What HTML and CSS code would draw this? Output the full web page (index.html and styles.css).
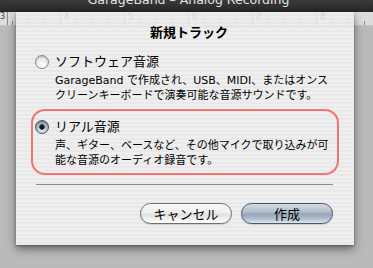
FILE: index.html
```html
<!DOCTYPE html>
<html lang="ja">
<head>
    <meta charset="UTF-8">
    <title>新規トラック</title>
    <link rel="stylesheet" href="styles.css">
</head>
<body>
<div class="titlebar"><span>GarageBand – Analog Recording</span></div>
<div class="workspace">
    <div class="ruler">
        <span>3</span><span>4</span><span>5</span><span>6</span><span>7</span><span>8</span>
    </div>

    <!-- シート（ダイアログ） -->
    <div class="sheet">
        <h1 class="sheet-title">新規トラック</h1>

        <div class="option">
            <div class="option-row">
                <span class="radio"></span>
                <span class="option-label">ソフトウェア音源</span>
            </div>
            <p class="option-desc">GarageBand で作成され、USB、MIDI、またはオンス<br>クリーンキーボードで演奏可能な音源サウンドです。</p>
        </div>

        <div class="option option-on">
            <div class="option-row">
                <span class="radio radio-on"></span>
                <span class="option-label">リアル音源</span>
            </div>
            <p class="option-desc">声、ギター、ベースなど、その他マイクで取り込みが可<br>能な音源のオーディオ録音です。</p>
        </div>

        <div class="separator"></div>

        <div class="buttons">
            <button class="btn">キャンセル</button>
            <button class="btn btn-default">作成</button>
        </div>
    </div>
</div>
</body>
</html>
```

FILE: styles.css
```css
*{
    box-sizing: border-box;
}
html, body{
    margin: 0;
    padding: 0;
}
body{
    width: 373px;
    height: 268px;
    overflow: hidden;
    background: #bababa;
    font-family: "DejaVu Sans", "Noto Sans CJK JP", sans-serif;
    color: #000;
}

/* ウィンドウのタイトルバー（上が切れている） */
.titlebar{
    height: 12px;
    overflow: hidden;
    background: linear-gradient(#3a3a3a, #262626);
    text-align: center;
}
.titlebar span{
    display: block;
    margin-top: -7px;
    padding-left: 4px;
    font-size: 12.5px;
    line-height: 14px;
    color: #e4e4e4;
}

.workspace{
    position: relative;
    height: 256px;
}

/* 定規 */
.ruler{
    display: flex;
    height: 14px;
    background-color: #dcdcdc;
    background-image:
        repeating-linear-gradient(to right, #8a8a8a 0 1px, transparent 1px 64px),
        repeating-linear-gradient(to right, #8a8a8a 0 1px, transparent 1px 16px);
    background-position: 60px 0, 12px 100%;
    background-size: 100% 100%, 100% 4px;
    background-repeat: repeat-x;
    border-bottom: 1px solid #c4c4c4;
}
.ruler span{
    flex: 0 0 64px;
    font-size: 8px;
    line-height: 10px;
    color: #444;
}

/* シート */
.sheet{
    position: absolute;
    left: 16px;
    top: 0;
    width: 338px;
    height: 233px;
    padding: 13px 0 0;
    background:
        repeating-linear-gradient(to bottom, rgba(239,239,239,.86) 0 2px, rgba(232,232,232,.86) 2px 4px),
        linear-gradient(to bottom, transparent 0 15px, #ececec 15px);
    box-shadow: 0 4px 9px rgba(0,0,0,.45), 0 1px 2px rgba(0,0,0,.3);
}
.sheet-title{
    margin: 0 0 3px;
    font-size: 13px;
    font-weight: bold;
    line-height: 16px;
    text-align: center;
    padding-left: 8px;
}

.option{
    margin: 0 15px;
    padding: 8px 0 5px 2px;
    border: 2px solid transparent;
    border-radius: 14px;
}
.option-on{
    margin-top: -1px;
    border-color: #ef7474;
}
.option-row{
    display: flex;
    align-items: center;
    gap: 6px;
    height: 16px;
}
.option-label{
    font-size: 13px;
    line-height: 16px;
}
.option-desc{
    margin: 3px 0 0 20px;
    font-size: 11px;
    line-height: 15px;
    white-space: nowrap;
}

/* ラジオボタン */
.radio{
    flex: 0 0 14px;
    width: 14px;
    height: 14px;
    border-radius: 50%;
    border: 1px solid #858585;
    background: radial-gradient(circle at 50% 75%, #ffffff 0, #f4f4f4 35%, #cfcfcf 100%);
    box-shadow: inset 0 1px 1px rgba(0,0,0,.15);
}
.radio-on{
    border-color: #4a5261;
    background:
        radial-gradient(circle, #1c1c1c 0 2.4px, transparent 3px),
        radial-gradient(circle at 50% 80%, #e3e8ee 0, #aab6c4 55%, #72829a 100%);
}

.separator{
    height: 1px;
    margin: 9px 21px 0 20px;
    background: #8a8a8a;
}

/* ボタン */
.buttons{
    display: flex;
    justify-content: flex-end;
    gap: 9px;
    margin: 18px 21px 0 0;
}
.btn{
    width: 92px;
    height: 21px;
    padding: 0;
    border: 1px solid #6e6e6e;
    border-radius: 11px;
    font-family: "Noto Sans CJK JP", sans-serif;
    font-size: 13px;
    line-height: 18px;
    color: #000;
    background: linear-gradient(#fafafa 0, #eeeeee 45%, #e0e0e0 55%, #f4f4f4 85%, #ffffff 100%);
    box-shadow: 0 1px 1px rgba(0,0,0,.15);
}
.btn-default{
    border-color: #4d5666;
    background: linear-gradient(#d2dae3 0, #b4c0ce 40%, #96a6b9 55%, #b4c2d1 80%, #dfe6ee 100%);
}
```
